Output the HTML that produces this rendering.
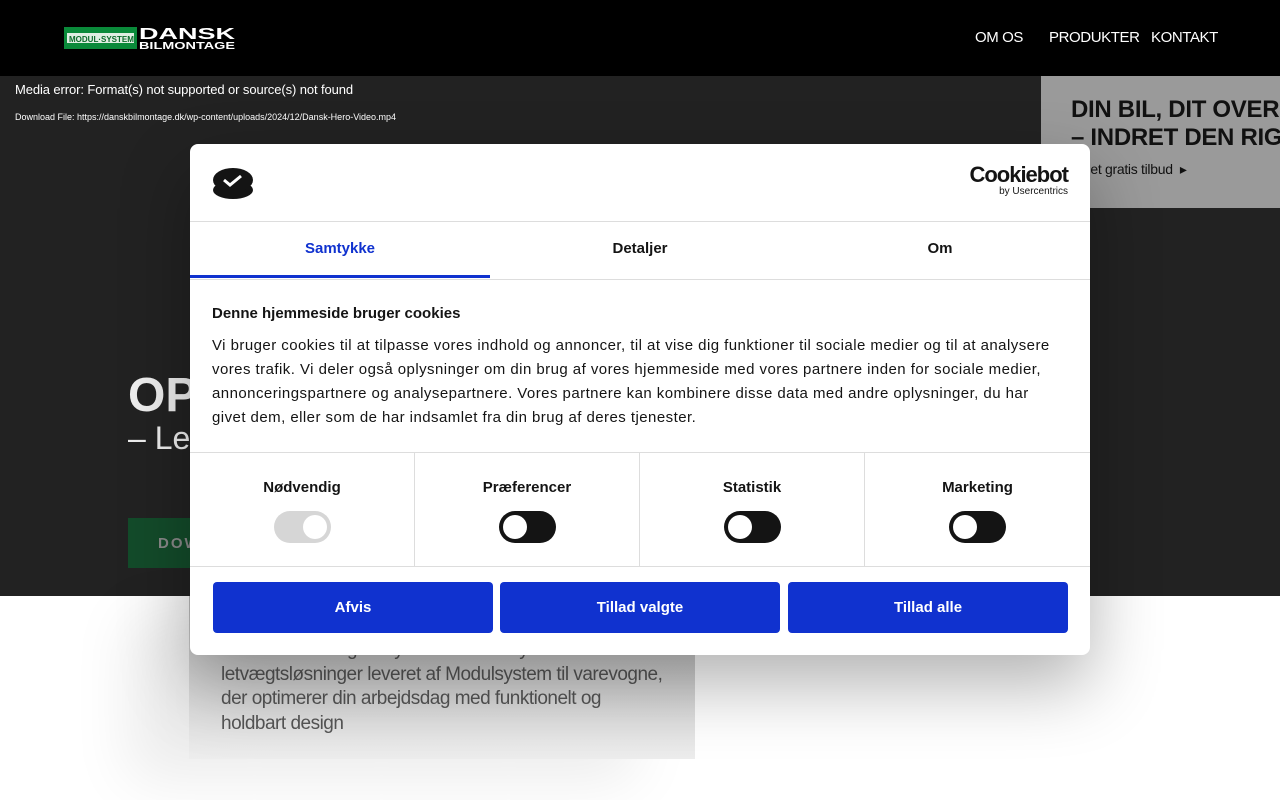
<!DOCTYPE html>
<html><head><meta charset="utf-8"><style>
*{margin:0;padding:0;box-sizing:border-box}
body{width:1280px;height:800px;overflow:hidden;background:#fff;font-family:"Liberation Sans",sans-serif;position:relative}
.hdr{position:absolute;left:0;top:0;width:1280px;height:76px;background:#000}
.nav{position:absolute;top:29px;color:#fff;font-size:15px;letter-spacing:-0.4px}
.hero{position:absolute;left:0;top:76px;width:1280px;height:520px;background:#222}
.err{position:absolute;left:15px;top:82px;color:#fff;font-size:13px;letter-spacing:-0.1px}
.dl{position:absolute;left:15px;top:112px;color:#fff;font-size:9px}
.promo{position:absolute;left:1041px;top:76px;width:239px;height:132px;background:#9a9a9a;overflow:hidden}
.promo h2{position:absolute;left:30px;top:20px;font-size:24px;line-height:28px;color:#111;white-space:nowrap;font-weight:bold;letter-spacing:-0.3px}
.promo p{position:absolute;left:30px;top:85px;font-size:14px;color:#111;white-space:nowrap;letter-spacing:-0.3px}
.op{position:absolute;left:128px;top:368px;color:#eee;font-size:48px;font-weight:bold}
.let{position:absolute;left:128px;top:420px;color:#eee;font-size:32px;font-weight:300}
.btn{position:absolute;left:128px;top:518px;width:200px;height:50px;background:#134b2a;color:#888;font-size:15px;font-weight:bold;letter-spacing:2px;padding:17px 30px}
.card{position:absolute;left:189px;top:596px;width:506px;height:163px;background:linear-gradient(#b8b8b8,#ededed);box-shadow:-60px 20px 60px rgba(0,0,0,0.08)}
.card p{position:absolute;left:32px;top:42px;font-size:19px;line-height:24.5px;color:#555;white-space:nowrap;letter-spacing:-0.5px}
.dlg{position:absolute;left:190px;top:144px;width:900px;height:511px;background:#fff;border-radius:8px;box-shadow:0 30px 70px rgba(0,0,0,0.3);overflow:hidden;color:#141414}
.line{position:absolute;left:0;width:900px;height:1px;background:#ddd}
.tab{position:absolute;top:96px;font-size:15px;font-weight:bold;width:300px;text-align:center}
.sect{position:absolute;top:308px;width:225px;height:114px;border-right:1px solid #ddd;text-align:center}
.sect b{display:block;margin-top:27px;font-size:15px}
.tg{display:inline-block;margin-top:15px;width:57px;height:32px;border-radius:16px;background:#141414;position:relative}
.tg i{position:absolute;left:4px;top:4px;width:24px;height:24px;border-radius:50%;background:#fff}
.tg.on{background:#d6d6d6}.tg.on i{left:29px}
.b{position:absolute;top:438px;width:280px;height:51px;background:#1032cf;color:#fff;font-weight:bold;font-size:15px;text-align:center;line-height:51px;border-radius:4px}
</style></head><body>
<div class="hdr">
<svg style="position:absolute;left:64px;top:26px" width="172" height="24">
<rect x="0" y="1" width="73" height="22" fill="#0a8a3a"/><rect x="3" y="7" width="67" height="10" fill="#dfeee2"/>
<text x="5" y="16" font-size="8" font-weight="bold" fill="#0a6a2a" font-family="Liberation Sans">MODUL·SYSTEM</text>
<text x="75" y="13" font-size="16" font-weight="bold" fill="#fff" font-family="Liberation Sans" textLength="96" lengthAdjust="spacingAndGlyphs">DANSK</text>
<text x="75" y="23" font-size="10" font-weight="bold" fill="#fff" font-family="Liberation Sans" textLength="96" lengthAdjust="spacingAndGlyphs">BILMONTAGE</text></svg>
<div class="nav" style="left:975px">OM OS</div>
<div class="nav" style="left:1049px">PRODUKTER</div>
<div class="nav" style="left:1151px">KONTAKT</div>
</div>
<div class="hero"></div>
<div class="err">Media error: Format(s) not supported or source(s) not found</div>
<div class="dl">Download File: https://danskbilmontage.dk/wp-content/uploads/2024/12/Dansk-Hero-Video.mp4</div>
<div class="promo"><h2>DIN BIL, DIT OVERBLIK<br>– INDRET DEN RIGTIGT</h2><p>Få et gratis tilbud &nbsp;▸</p></div>
<div class="op">OPTIMERET</div>
<div class="let">– Letvægt</div>
<div class="btn">DOWNLOAD</div>
<div class="card"><p>Dansk Bilmontage tilbyder skræddersyede<br>letvægtsløsninger leveret af Modulsystem til varevogne,<br>der optimerer din arbejdsdag med funktionelt og<br>holdbart design</p></div>
<div class="dlg">
<svg style="position:absolute;left:22px;top:22px" width="42" height="34"><ellipse cx="21" cy="24" rx="20" ry="9" fill="#141414"/><ellipse cx="21" cy="14" rx="20" ry="12" fill="#141414"/><path d="M12 14l6 5 11-9" stroke="#fff" stroke-width="3" fill="none"/></svg>
<div style="position:absolute;right:22px;top:20px;text-align:right"><div style="font-size:22px;font-weight:bold;letter-spacing:-1px;line-height:22px">Cookiebot</div><div style="font-size:10px">by Usercentrics</div></div>
<div class="line" style="top:77px"></div>
<div class="tab" style="left:0;color:#1032cf">Samtykke</div>
<div class="tab" style="left:300px">Detaljer</div>
<div class="tab" style="left:600px">Om</div>
<div style="position:absolute;left:0;top:131px;width:300px;height:3px;background:#1032cf"></div>
<div class="line" style="top:135px"></div>
<div style="position:absolute;left:22px;top:161px;font-size:15px;font-weight:bold">Denne hjemmeside bruger cookies</div>
<div style="position:absolute;left:22px;top:190px;width:858px;font-size:15px;line-height:24px;letter-spacing:0.45px">Vi bruger cookies til at tilpasse vores indhold og annoncer, til at vise dig funktioner til sociale medier og til at analysere vores trafik. Vi deler også oplysninger om din brug af vores hjemmeside med vores partnere inden for sociale medier, annonceringspartnere og analysepartnere. Vores partnere kan kombinere disse data med andre oplysninger, du har<br>givet dem, eller som de har indsamlet fra din brug af deres tjenester.</div>
<div class="line" style="top:308px"></div>
<div class="sect" style="left:0"><b>Nødvendig</b><span class="tg on"><i></i></span></div>
<div class="sect" style="left:225px"><b>Præferencer</b><span class="tg"><i></i></span></div>
<div class="sect" style="left:450px"><b>Statistik</b><span class="tg"><i></i></span></div>
<div class="sect" style="left:675px;border:0"><b>Marketing</b><span class="tg"><i></i></span></div>
<div class="line" style="top:422px"></div>
<div class="b" style="left:23px">Afvis</div>
<div class="b" style="left:310px">Tillad valgte</div>
<div class="b" style="left:598px">Tillad alle</div>
</div>
</body></html>
